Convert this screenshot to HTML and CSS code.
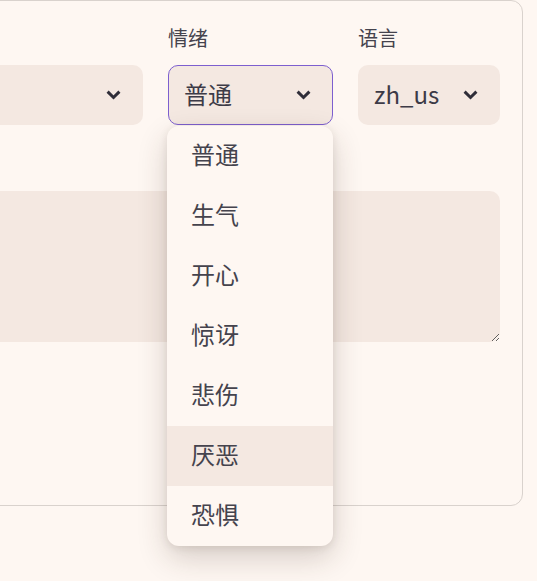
FILE: index.html
```html
<!DOCTYPE html>
<html lang="zh">
<head>
<meta charset="utf-8">
<link rel="stylesheet" href="styles.css">
</head>
<body>
<div class="card">
  <div class="row">
    <div class="field field-main">
      <div class="lbl">文本</div>
      <div class="select">
        <span class="val"></span>
        <svg class="chev" viewBox="0 0 15 10" width="15" height="10"><path d="M1.6 1.6 L7.5 7.5 L13.4 1.6" fill="none" stroke="#2f2d38" stroke-width="3"/></svg>
      </div>
    </div>
    <div class="field field-emo">
      <div class="lbl">情绪</div>
      <div class="select focused">
        <span class="val">普通</span>
        <svg class="chev" viewBox="0 0 15 10" width="15" height="10"><path d="M1.6 1.6 L7.5 7.5 L13.4 1.6" fill="none" stroke="#2f2d38" stroke-width="3"/></svg>
      </div>
      <ul class="menu">
        <li class="opt">普通</li>
        <li class="opt">生气</li>
        <li class="opt">开心</li>
        <li class="opt">惊讶</li>
        <li class="opt">悲伤</li>
        <li class="opt active">厌恶</li>
        <li class="opt">恐惧</li>
      </ul>
    </div>
    <div class="field field-lang">
      <div class="lbl">语言</div>
      <div class="select">
        <span class="val">zh_us</span>
        <svg class="chev" viewBox="0 0 15 10" width="15" height="10"><path d="M1.6 1.6 L7.5 7.5 L13.4 1.6" fill="none" stroke="#2f2d38" stroke-width="3"/></svg>
      </div>
    </div>
  </div>
  <textarea class="ta"></textarea>
</div>
</body>
</html>
```
FILE: styles.css
```css
html {
  background: #fef7f2;
}
body {
  margin: 0;
  padding: 0;
  min-height: 581px;
  background: #fef7f2;
  font-family: "Noto Sans CJK SC", "Noto Sans", sans-serif;
  color: #3d3b47;
}
.card {
  box-sizing: border-box;
  margin-left: -200px;
  width: 723px;
  height: 506px;
  background: #fef7f2;
  border: 1px solid #d9d2cd;
  border-radius: 12px;
  padding: 23px 22px 0 40px;
}
.row {
  display: flex;
  gap: 25px;
  align-items: flex-start;
}
.field {
  position: relative;
  display: flex;
  flex-direction: column;
}
.field-main { flex: 1; }
.field-main .lbl { visibility: hidden; }
.field-emo { width: 165px; }
.field-lang { width: 142px; }
.lbl {
  font-size: 20px;
  line-height: 28px;
  margin-bottom: 13px;
  color: #45434d;
}
.select {
  box-sizing: border-box;
  height: 60px;
  background: #f4e8e1;
  border-radius: 10px;
  display: flex;
  align-items: center;
  justify-content: space-between;
  padding: 0 22px 3px 16px;
  font-size: 24px;
  color: #3d3b47;
}
.select .chev { margin-top: 3px; }
.select.focused {
  border: 1px solid #7d5fcf;
  padding: 0 21px 3px 15px;
}
.chev { display: block; }
.menu {
  position: absolute;
  top: 102px;
  left: -1px;
  width: 166px;
  margin: 0;
  padding: 0;
  list-style: none;
  background: #fef7f2;
  border-radius: 12px;
  overflow: hidden;
  box-shadow: 0 12px 30px rgba(60, 40, 30, 0.2), 0 2px 8px rgba(60, 40, 30, 0.1);
  z-index: 5;
}
.opt {
  box-sizing: border-box;
  height: 60px;
  line-height: 56px;
  padding-left: 24px;
  font-size: 24px;
  color: #45434d;
}
.opt.active { background: #f4e8e1; }
.ta {
  display: block;
  box-sizing: border-box;
  width: 100%;
  height: 151px;
  margin-top: 66px;
  border: none;
  outline: none;
  border-radius: 10px;
  background: #f4e8e1;
  resize: vertical;
  font-family: inherit;
}
```
